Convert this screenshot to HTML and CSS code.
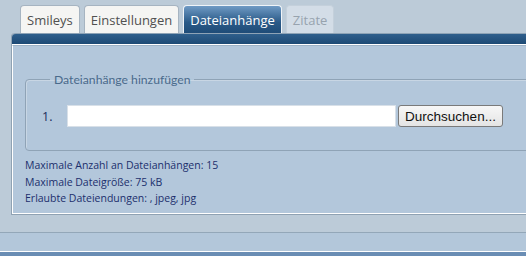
FILE: index.html
```html
<!DOCTYPE html>
<html lang="de">
<head>
    <meta charset="UTF-8">
    <title>Dateianhänge</title>
    <link rel="stylesheet" href="styles.css">
</head>
<body>

    <!-- Tabs -->
    <div class="tabs">
        <a href="#" class="tab">Smileys</a>
        <a href="#" class="tab">Einstellungen</a>
        <a href="#" class="tab active">Dateianhänge</a>
        <span class="tab disabled">Zitate</span>
    </div>

    <!-- Panel -->
    <div class="panel">
        <div class="panel-bar"></div>
        <div class="panel-body">
            <fieldset class="upload">
                <legend>Dateianhänge hinzufügen</legend>
                <div class="upload-row">
                    <span class="num">1.</span>
                    <input type="text" class="file-input">
                    <button type="button" class="browse">Durchsuchen...</button>
                </div>
            </fieldset>
            <div class="info">
                <p>Maximale Anzahl an Dateianhängen: 15</p>
                <p>Maximale Dateigröße: 75 kB</p>
                <p>Erlaubte Dateiendungen: , jpeg, jpg</p>
            </div>
        </div>
    </div>

    <!-- Footer bands -->
    <div class="footer">
        <div class="footer-band"></div>
        <div class="footer-bar"></div>
    </div>

</body>
</html>
```

FILE: styles.css
```css
body {
    margin: 0;
    background-color: #bccbd8;
    font-family: "Open Sans", sans-serif;
    overflow: hidden;
}

/* Tabs */
.tabs {
    display: flex;
    gap: 4px;
    padding: 5px 0 0 20px;
    height: 28px;
}

.tab {
    display: flex;
    align-items: center;
    padding: 1px 6px 0;
    font-size: 13px;
    color: #505050;
    text-decoration: none;
    background-color: #f5f5f3;
    border: 1px solid #a6b4c1;
    border-bottom: none;
    border-radius: 4px 4px 0 0;
}

.tab.active {
    color: #fff;
    background: linear-gradient(#6f9ac4, #2a5a88 60%, #1f4c78);
    border-color: #f0f4f8;
}

.tab.disabled {
    color: #97a3ae;
    background-color: #d3dde7;
    border-color: #c4d0db;
}

/* Panel */
.panel {
    margin-left: 11px;
    border-left: 1px solid #8fa2b3;
    border-bottom: 1px solid #8fa2b3;
    border-top-left-radius: 4px;
    height: 181px;
}

.panel-bar {
    height: 10px;
    background: linear-gradient(#2f5f8c, #1d4a75);
    border-top: 1px solid #8ea3b6;
    border-bottom: 1px solid #fff;
    border-top-left-radius: 4px;
}

.panel-body {
    background-color: #b3c7db;
    border-left: 1px solid #fff;
    border-top: 1px solid #9db2c6;
    border-bottom: 1px solid #fff;
    padding: 26px 0 0 12px;
    height: 141px;
}

.upload {
    margin: 0 -20px 0 0;
    padding: 18px 0 17px 16px;
    border: 1px solid #8fa3b6;
    border-radius: 4px;
    box-shadow: inset 1px 1px 0 #c8d6e4;
    height: 42px;
}

.upload legend {
    padding: 0 4px;
    margin-left: 8px;
    font-family: Lato, "Open Sans", sans-serif;
    font-size: 12.2px;
    color: #4a6a8b;
}

.upload-row {
    display: flex;
    align-items: center;
}

.num {
    width: 25px;
    font-size: 12.5px;
    color: #1b2b5c;
}

.file-input {
    width: 327px;
    height: 20px;
    padding: 0;
    border: 1px solid #d8e0e8;
    background-color: #fff;
}

.browse {
    margin-left: 2px;
    width: 105px;
    height: 22px;
    padding: 0;
    font-family: "Liberation Sans", Arial, sans-serif;
    font-size: 13.5px;
    color: #111;
    background: linear-gradient(#f7f7f7, #e4e4e4);
    border: 1px solid #7a7a7a;
    border-radius: 3px;
}

.info {
    padding-top: 6px;
}

.info p {
    margin: 0;
    font-size: 10.5px;
    line-height: 16.5px;
    color: #1c2f6d;
}

/* Footer */
.footer {
    margin-top: 17px;
}

.footer-band {
    height: 18px;
    background-color: #b3c7da;
    border-top: 1px solid #93a7b8;
    border-bottom: 1px solid #fff;
}

.footer-bar {
    height: 4px;
    background-color: #6a8db4;
}
```
